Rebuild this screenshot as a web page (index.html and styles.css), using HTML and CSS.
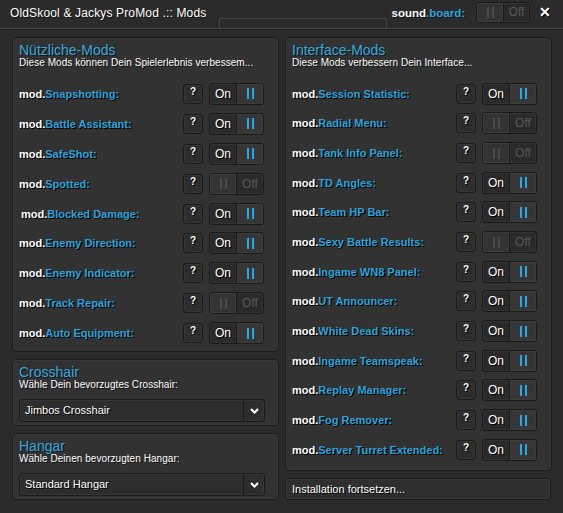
FILE: index.html
```html
<!DOCTYPE html>
<html lang="de">
<head>
	<meta charset="UTF-8">
	<title>ProMod Mods</title>
	<link rel="stylesheet" href="styles.css">
</head>
<body>
<div class="window">
	<div class="titlebar">
		<span class="apptitle">OldSkool &amp; Jackys ProMod .:: Mods</span>
		<span class="tab"></span>
		<span class="sound"><b>sound</b><b class="blue">.board:</b></span>
		<span class="switch off small"><span class="knob"><i></i><i></i></span><span class="txt">Off</span></span>
		<span class="close">✕</span>
	</div>

	<div class="content">
		<div class="col">
			<div class="panel mods">
				<h2>Nützliche-Mods</h2>
				<p class="sub">Diese Mods können Dein Spielerlebnis verbessem...</p>
				<div class="rows left">
					<div class="row"><span class="lbl">mod.<em>Snapshotting:</em></span><span class="help">?</span><span class="switch on"><span class="txt">On</span><span class="knob"><i></i><i></i></span></span></div>
					<div class="row"><span class="lbl">mod.<em>Battle Assistant:</em></span><span class="help">?</span><span class="switch on"><span class="txt">On</span><span class="knob"><i></i><i></i></span></span></div>
					<div class="row"><span class="lbl">mod.<em>SafeShot:</em></span><span class="help">?</span><span class="switch on"><span class="txt">On</span><span class="knob"><i></i><i></i></span></span></div>
					<div class="row"><span class="lbl">mod.<em>Spotted:</em></span><span class="help">?</span><span class="switch off"><span class="knob"><i></i><i></i></span><span class="txt">Off</span></span></div>
					<div class="row"><span class="lbl nudge">mod.<em>Blocked Damage:</em></span><span class="help">?</span><span class="switch on"><span class="txt">On</span><span class="knob"><i></i><i></i></span></span></div>
					<div class="row"><span class="lbl">mod.<em>Enemy Direction:</em></span><span class="help">?</span><span class="switch on"><span class="txt">On</span><span class="knob"><i></i><i></i></span></span></div>
					<div class="row"><span class="lbl">mod.<em>Enemy Indicator:</em></span><span class="help">?</span><span class="switch on"><span class="txt">On</span><span class="knob"><i></i><i></i></span></span></div>
					<div class="row"><span class="lbl">mod.<em>Track Repair:</em></span><span class="help">?</span><span class="switch off"><span class="knob"><i></i><i></i></span><span class="txt">Off</span></span></div>
					<div class="row"><span class="lbl">mod.<em>Auto Equipment:</em></span><span class="help">?</span><span class="switch on"><span class="txt">On</span><span class="knob"><i></i><i></i></span></span></div>
				</div>
			</div>

			<div class="panel pick">
				<h2>Crosshair</h2>
				<p class="sub">Wähle Dein bevorzugtes Crosshair:</p>
				<div class="select"><span class="val">Jimbos Crosshair</span><span class="arrow"><svg width="9" height="6" viewBox="0 0 9 6"><path d="M1 1 L4.5 4.5 L8 1" fill="none" stroke="#fff" stroke-width="2"/></svg></span></div>
			</div>

			<div class="panel pick">
				<h2>Hangar</h2>
				<p class="sub">Wähle Deinen bevorzugten Hangar:</p>
				<div class="select"><span class="val">Standard Hangar</span><span class="arrow"><svg width="9" height="6" viewBox="0 0 9 6"><path d="M1 1 L4.5 4.5 L8 1" fill="none" stroke="#fff" stroke-width="2"/></svg></span></div>
			</div>
		</div>

		<div class="col">
			<div class="panel ifmods">
				<h2>Interface-Mods</h2>
				<p class="sub">Diese Mods verbessern Dein Interface...</p>
				<div class="rows right">
					<div class="row"><span class="lbl">mod.<em>Session Statistic:</em></span><span class="help">?</span><span class="switch on"><span class="txt">On</span><span class="knob"><i></i><i></i></span></span></div>
					<div class="row"><span class="lbl">mod.<em>Radial Menu:</em></span><span class="help">?</span><span class="switch off"><span class="knob"><i></i><i></i></span><span class="txt">Off</span></span></div>
					<div class="row"><span class="lbl">mod.<em>Tank Info Panel:</em></span><span class="help">?</span><span class="switch off"><span class="knob"><i></i><i></i></span><span class="txt">Off</span></span></div>
					<div class="row"><span class="lbl">mod.<em>TD Angles:</em></span><span class="help">?</span><span class="switch on"><span class="txt">On</span><span class="knob"><i></i><i></i></span></span></div>
					<div class="row"><span class="lbl">mod.<em>Team HP Bar:</em></span><span class="help">?</span><span class="switch on"><span class="txt">On</span><span class="knob"><i></i><i></i></span></span></div>
					<div class="row"><span class="lbl">mod.<em>Sexy Battle Results:</em></span><span class="help">?</span><span class="switch off"><span class="knob"><i></i><i></i></span><span class="txt">Off</span></span></div>
					<div class="row"><span class="lbl">mod.<em>Ingame WN8 Panel:</em></span><span class="help">?</span><span class="switch on"><span class="txt">On</span><span class="knob"><i></i><i></i></span></span></div>
					<div class="row"><span class="lbl">mod.<em>UT Announcer:</em></span><span class="help">?</span><span class="switch on"><span class="txt">On</span><span class="knob"><i></i><i></i></span></span></div>
					<div class="row"><span class="lbl">mod.<em>White Dead Skins:</em></span><span class="help">?</span><span class="switch on"><span class="txt">On</span><span class="knob"><i></i><i></i></span></span></div>
					<div class="row"><span class="lbl">mod.<em>Ingame Teamspeak:</em></span><span class="help">?</span><span class="switch on"><span class="txt">On</span><span class="knob"><i></i><i></i></span></span></div>
					<div class="row"><span class="lbl">mod.<em>Replay Manager:</em></span><span class="help">?</span><span class="switch on"><span class="txt">On</span><span class="knob"><i></i><i></i></span></span></div>
					<div class="row"><span class="lbl">mod.<em>Fog Remover:</em></span><span class="help">?</span><span class="switch on"><span class="txt">On</span><span class="knob"><i></i><i></i></span></span></div>
					<div class="row"><span class="lbl">mod.<em>Server Turret Extended:</em></span><span class="help">?</span><span class="switch on"><span class="txt">On</span><span class="knob"><i></i><i></i></span></span></div>
				</div>
			</div>
			<div class="install">Installation fortsetzen...</div>
		</div>
	</div>
</div>
</body>
</html>
```

FILE: styles.css
```css
body{
	margin: 0;
	background: #2b2b2b;
	font-family: "Liberation Sans", Arial, sans-serif;
	color: #fff;
}
.window{
	width: 563px;
	height: 513px;
	background: #2b2b2b;
	overflow: hidden;
}
.titlebar{
	position: relative;
	display: flex;
	align-items: center;
	height: 28px;
	padding: 0 0 0 10px;
	border-bottom: 1px solid #444;
	box-shadow: 0 1px 0 #1c1c1c;
}
.apptitle{
	font-size: 12px;
	letter-spacing: 0.15px;
	margin-top: -2px;
	text-shadow: 1px 1px 0 #111;
}
.tab{
	position: absolute;
	left: 219px;
	top: 18px;
	width: 166px;
	height: 10px;
	border: 1px solid #454545;
	border-bottom: none;
}
.sound{
	margin-left: auto;
	margin-right: 11px;
	font-size: 11.5px;
	margin-top: -3px;
	text-shadow: 1px 1px 0 #111;
}
.blue{
	color: #33a6dc;
}
.close{
	font-size: 14px;
	font-weight: bold;
	margin: -4px 12px 0 9px;
	text-shadow: 1px 1px 0 #000;
}

.content{
	display: flex;
	gap: 6px;
	padding: 8px 11px 0 12px;
}
.col{
	width: 267px;
	display: flex;
	flex-direction: column;
	gap: 7px;
}
.panel{
	box-sizing: border-box;
	background: #323232;
	border: 1px solid #1c1c1c;
	border-radius: 4px;
	box-shadow: inset 0 0 0 1px #383838;
	padding: 6px 14px 0 6px;
}
.mods{ height: 315px; }
.ifmods{ height: 434px; }
.pick{ height: 67px; }

.panel h2{
	margin: 0;
	font-size: 14px;
	font-weight: normal;
	line-height: 13px;
	color: #38a9df;
	text-shadow: 1px 1px 0 #151515;
}
.panel .sub{
	margin: 0;
	font-size: 10px;
	letter-spacing: 0.05px;
	line-height: 11px;
	text-shadow: 1px 1px 0 #111;
}

.rows{
	display: flex;
	flex-direction: column;
	padding-top: 11px;
}
.left .row{ height: 29.9px; }
.right .row{ height: 29.67px; }
.row{
	display: flex;
	align-items: center;
	gap: 6px;
}
.lbl{
	flex: 1;
	font-size: 11px;
	font-weight: bold;
	text-shadow: 1px 1px 0 #000;
}
.lbl em{
	font-style: normal;
	color: #2fa3da;
}
.nudge{
	padding-left: 2px;
}
.help{
	box-sizing: border-box;
	width: 20px;
	height: 20px;
	background: #2d2d2d;
	border: 1px solid #1b1b1b;
	border-radius: 3px;
	box-shadow: inset 0 0 0 1px #363636;
	font-size: 10px;
	font-weight: bold;
	line-height: 14px;
	text-align: center;
	text-shadow: 1px 1px 0 #000;
}

.switch{
	box-sizing: border-box;
	display: flex;
	width: 55px;
	height: 22px;
	background: #2a2a2a;
	border: 1px solid #1a1a1a;
	border-radius: 3px;
	box-shadow: inset 0 0 0 1px #333;
	overflow: hidden;
}
.switch .txt{
	flex: 1;
	font-size: 12px;
	line-height: 20px;
	text-align: center;
}
.switch.on .txt{
	text-shadow: 1px 1px 0 #000;
}
.switch.off .txt{
	color: #585858;
}
.knob{
	width: 26px;
	display: flex;
	justify-content: center;
	align-items: center;
	gap: 3px;
	background: #363636;
	box-shadow: inset 0 0 0 1px #3c3c3c;
}
.switch.on .knob{
	border-left: 1px solid #1a1a1a;
}
.switch.off .knob{
	border-right: 1px solid #1a1a1a;
	background: #333;
}
.knob i{
	width: 2px;
	height: 11px;
	background: #2ba7e4;
}
.switch.off .knob i{
	background: #4a4a4a;
}
.switch.small{
	width: 54px;
	height: 21px;
	margin-top: -3px;
}
.switch.small .txt{
	line-height: 19px;
}

.select{
	box-sizing: border-box;
	display: flex;
	height: 23px;
	margin-top: 9px;
	width: 246px;
	background: #2d2d2d;
	border: 1px solid #1b1b1b;
	border-radius: 3px;
	box-shadow: inset 0 0 0 1px #363636;
}
.select .val{
	flex: 1;
	padding-left: 5px;
	font-size: 11px;
	line-height: 21px;
	text-shadow: 1px 1px 0 #000;
}
.select .arrow{
	width: 20px;
	border-left: 1px solid #1b1b1b;
	display: flex;
	align-items: center;
	justify-content: center;
}

.install{
	box-sizing: border-box;
	height: 22px;
	width: 266px;
	background: #2f2f2f;
	border: 1px solid #1b1b1b;
	border-radius: 3px;
	box-shadow: inset 0 0 0 1px #383838;
	padding-left: 6px;
	font-size: 11px;
	line-height: 20px;
	text-shadow: 1px 1px 0 #000;
}
```
